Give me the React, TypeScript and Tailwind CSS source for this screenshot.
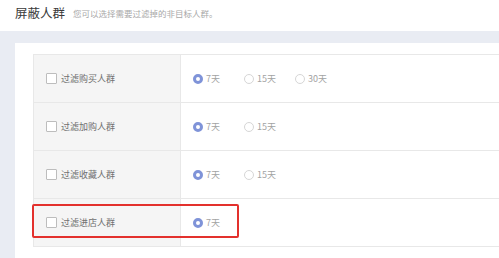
const rows = [
  { label: '过滤购买人群', options: ['7天', '15天', '30天'] },
  { label: '过滤加购人群', options: ['7天', '15天'] },
  { label: '过滤收藏人群', options: ['7天', '15天'] },
  { label: '过滤进店人群', options: ['7天'] },
];

function Radio({ text, checked }: { text: string; checked: boolean }) {
  return (
    <label className="flex items-center gap-[3px] w-[51px]">
      <span
        className={
          checked
            ? 'w-[10px] h-[10px] rounded-full border-[3px] border-[#7f93d8] bg-white'
            : 'w-[10px] h-[10px] rounded-full border border-[#d6d6d6] bg-white'
        }
      />
      <span className="text-[9px] text-[#a3a3a3]">{text}</span>
    </label>
  );
}

export default function App() {
  return (
    <div className="w-[499px] h-[258px] bg-white overflow-hidden" style={{ fontFamily: '"Noto Sans CJK SC", "Liberation Sans", sans-serif' }}>
      <div className="h-[31px] flex items-center gap-2 pl-[15px] pb-[4px]">
        <span className="text-[12.5px] text-[#3a3a3a]">屏蔽人群</span>
        <span className="text-[8.5px] text-[#a8a8a8]">您可以选择需要过滤掉的非目标人群。</span>
      </div>
      <div className="bg-[#e9ecf3] pt-[12px] pl-[15px] h-[227px]">
        <div className="bg-white h-full pt-[11px] pl-[18px]">
          <div className="border-t border-[#e8e8e8]">
            {rows.map((r, i) => (
              <div key={r.label} className="relative flex h-[48px] border-b border-[#e8e8e8] border-l">
                <div className="w-[147px] bg-[#f5f5f5] border-r border-[#e8e8e8] flex items-center pl-[12px] gap-[4px]">
                  <span className="w-[11px] h-[11px] border border-[#bdbdbd] bg-white rounded-[1px]" />
                  <span className="text-[9px] text-[#707070]">{r.label}</span>
                </div>
                <div className="flex items-center pl-[12px]">
                  {r.options.map((o, j) => (
                    <Radio key={o} text={o} checked={j === 0} />
                  ))}
                </div>
                {i === 3 && (
                  <div className="absolute left-[-2px] top-[5px] w-[207px] h-[34px] border-2 border-[#e3312d] rounded-[2px]" />
                )}
              </div>
            ))}
          </div>
        </div>
      </div>
    </div>
  );
}
